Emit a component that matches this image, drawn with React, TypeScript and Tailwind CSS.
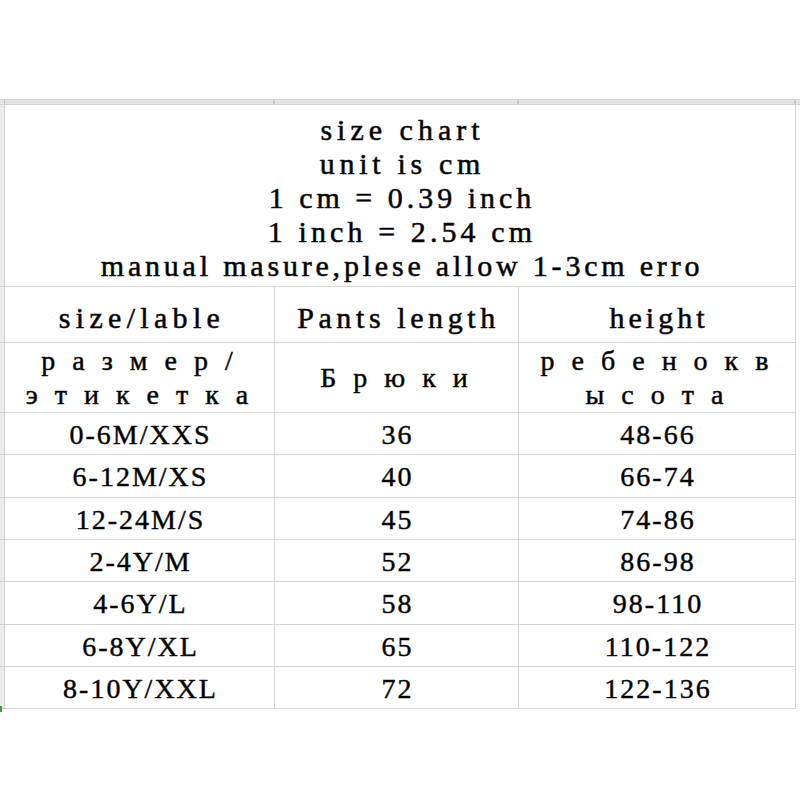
import React from "react";

const serif = { fontFamily: '"Liberation Serif", "DejaVu Serif", serif' };

const rows = [
  ["0-6M/XXS", "36", "48-66"],
  ["6-12M/XS", "40", "66-74"],
  ["12-24M/S", "45", "74-86"],
  ["2-4Y/M", "52", "86-98"],
  ["4-6Y/L", "58", "98-110"],
  ["6-8Y/XL", "65", "110-122"],
  ["8-10Y/XXL", "72", "122-136"],
];

const grid = "grid grid-cols-[5px_270px_244px_277px_4px]";
const cell = "border-r border-b border-[#d6d6d6] flex items-center justify-center text-center text-black";
const strip = "bg-[#ececec] border-r border-b border-[#cfcfcf]";
const tail = "border-b border-transparent";
const head = "text-[30px] [-webkit-text-stroke:0.55px_#111]";
const rus = "text-[28px] leading-[34px] tracking-[5px] [-webkit-text-stroke:0.5px_#111] whitespace-pre";

export default function App() {
  return (
    <div className="w-[800px] h-[800px] bg-white overflow-hidden relative" style={serif}>
      <div className="h-[99px]" />
      {/* spreadsheet column header band */}
      <div className={`${grid} h-[6px] bg-[#e4e4e4] border-t border-b border-[#d2d2d2]`}>
        <div className="border-r border-[#c4c4c4]" />
        <div className="border-r-2 border-[#c9c9c9]" />
        <div className="border-r-2 border-[#c9c9c9]" />
        <div className="border-r-2 border-[#c9c9c9]" />
        <div />
      </div>
      {/* title */}
      <div className={grid}>
        <div className={`${strip} h-[182px]`} />
        <div className={`${cell} col-span-3 flex-col h-[182px] pt-[4px] leading-[34px] ${head}`}>
          <div className="tracking-[5px] pl-[5px]">size chart</div>
          <div className="tracking-[4.7px] pl-[5px]">unit is cm</div>
          <div className="tracking-[4px] pl-[4px]">1 cm = 0.39 inch</div>
          <div className="tracking-[4.1px] pl-[4px]">1 inch = 2.54 cm</div>
          <div className="whitespace-nowrap tracking-[3.8px] pl-[4px]">manual masure,plese allow 1-3cm erro</div>
        </div>
        <div className={tail} />
      </div>
      {/* header */}
      <div className={grid}>
        <div className={`${strip} h-[56px]`} />
        <div className={`${cell} pt-[6px] leading-none ${head} tracking-[5.3px] pl-[5px]`}>size/lable</div>
        <div className={`${cell} pt-[6px] leading-none ${head} tracking-[4.6px] pl-[4px]`}>Pants length</div>
        <div className={`${cell} pt-[6px] leading-none ${head} tracking-[4px] pl-[4px]`}>height</div>
        <div className={tail} />
      </div>
      {/* russian */}
      <div className={grid}>
        <div className={`${strip} h-[70px]`} />
        <div className={`${cell} flex-col ${rus}`}>
          <div>р а з м е р /</div>
          <div>э т и к е т к а</div>
        </div>
        <div className={`${cell} ${rus}`}>Б р ю к и</div>
        <div className={`${cell} flex-col ${rus}`}>
          <div>р е б е н о к в</div>
          <div>ы с о т а</div>
        </div>
        <div className={tail} />
      </div>
      {rows.map((r, i) => (
        <div key={i} className={grid}>
          <div className={`${strip} ${i % 3 === 1 ? "h-[43px]" : "h-[42px]"}`} />
          {r.map((t, j) => (
            <div key={j} className={`${cell} pt-[2px] leading-none text-[28px] tracking-[2px] pl-[2px] [-webkit-text-stroke:0.45px_#111]`}>
              {t}
            </div>
          ))}
          <div className={tail} />
        </div>
      ))}
      <div className="absolute left-0 top-[706px] w-[2px] h-[6px] bg-[#3a9a3a]" />
    </div>
  );
}
